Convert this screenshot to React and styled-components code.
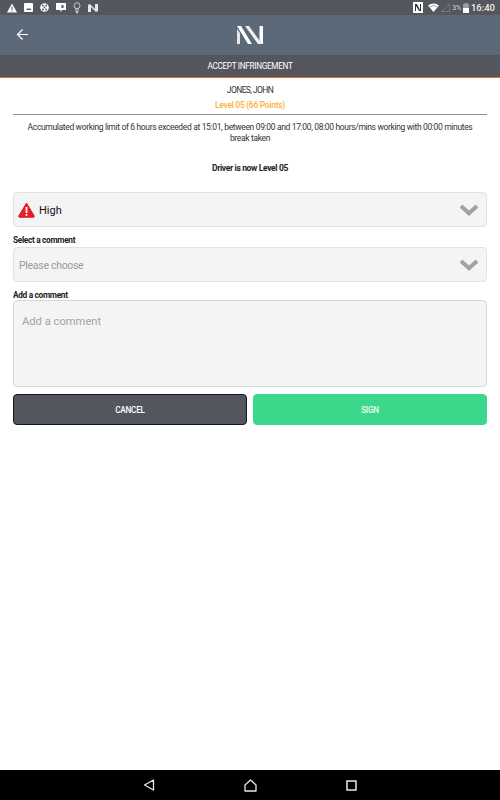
import React from 'react';
import styled, { createGlobalStyle } from 'styled-components';

const GlobalStyle = createGlobalStyle`
  html, body {
    margin: 0;
    padding: 0;
    background: #fff;
    font-family: Roboto, "Liberation Sans", sans-serif;
  }
`;

const Page = styled.div`
  width: 500px;
  height: 800px;
  display: flex;
  flex-direction: column;
  overflow: hidden;
`;

const StatusBar = styled.div`
  height: 15px;
  background: #55565e;
  display: flex;
  align-items: center;
  justify-content: space-between;
  padding: 0 5px 0 7px;
  color: #fff;
`;

const StatusGroup = styled.div`
  display: flex;
  align-items: center;
  gap: ${props => props.$gap || 0}px;
`;

const Clock = styled.span`
  font-size: 9.5px;
  font-weight: 500;
  color: #eee;
`;

const Percent = styled.span`
  font-size: 7px;
  letter-spacing: -0.2px;
  color: #d5d6da;
`;

const Header = styled.div`
  height: 40px;
  background: #5c6979;
  display: flex;
  align-items: center;
  justify-content: center;
  position: relative;
`;

const BackButton = styled.div`
  position: absolute;
  left: 16px;
  top: 13px;
  width: 13px;
  height: 13px;
  display: flex;
`;

const TitleBar = styled.div`
  height: 22px;
  background: #54555d;
  border-bottom: 1px solid #e0702c;
  display: flex;
  align-items: center;
  justify-content: center;
  color: #fff;
  font-size: 8.2px;
  letter-spacing: -0.3px;
`;

const Content = styled.div`
  flex: 1;
  padding: 0 13px;
  display: flex;
  flex-direction: column;
`;

const Summary = styled.div`
  height: 36px;
  border-bottom: 1px solid #8f8f8f;
  display: flex;
  flex-direction: column;
  align-items: center;
`;

const DriverName = styled.div`
  font-size: 8.5px;
  letter-spacing: -0.6px;
  color: #333;
  margin-top: 6px;
  line-height: 12px;
`;

const Level = styled.div`
  font-size: 8.5px;
  font-weight: 500;
  letter-spacing: -0.3px;
  color: #fbb034;
  margin-top: 3px;
  line-height: 12px;
`;

const Message = styled.div`
  font-size: 8.5px;
  line-height: 11px;
  letter-spacing: -0.345px;
  color: #333;
  text-align: center;
  margin: 7px 10px 0;
`;

const Notice = styled.div`
  font-size: 8.5px;
  font-weight: 700;
  letter-spacing: -0.35px;
  color: #222;
  text-align: center;
  margin-top: 18px;
  line-height: 12px;
`;

const SelectBox = styled.div`
  height: 35px;
  box-sizing: border-box;
  background: #f4f4f4;
  border: 1px solid #e2e2e2;
  border-radius: 4px;
  display: flex;
  align-items: center;
  justify-content: space-between;
  padding: 0 7px 0 ${props => props.$left}px;
  margin-top: ${props => props.$top || 0}px;
`;

const SelectValue = styled.div`
  display: flex;
  align-items: center;
  gap: 4px;
  padding-top: 1px;
  font-size: ${props => (props.$placeholder ? 10.5 : 11)}px;
  letter-spacing: ${props => (props.$placeholder ? -0.3 : 0)}px;
  color: ${props => (props.$placeholder ? '#9b9b9b' : '#111')};
`;

const FieldLabel = styled.div`
  font-size: 8.3px;
  font-weight: 700;
  letter-spacing: -0.32px;
  color: #222;
  line-height: ${props => props.$lineHeight}px;
  margin-top: 8px;
  margin-bottom: ${props => props.$bottom}px;
`;

const CommentBox = styled.div`
  height: 87px;
  box-sizing: border-box;
  background: #f4f4f4;
  border: 1px solid #d8d8d8;
  border-radius: 4px;
  padding: 14px 8px;
  font-size: 11.2px;
  line-height: 14px;
  color: #a3a3a3;
`;

const Actions = styled.div`
  display: flex;
  gap: 6px;
  margin-top: 7px;
`;

const ActionButton = styled.div`
  flex: 1;
  height: 31px;
  box-sizing: border-box;
  border-radius: 4px;
  display: flex;
  align-items: center;
  justify-content: center;
  color: ${props => (props.$primary ? '#e9fff4' : '#fff')};
  font-size: 8.2px;
  font-weight: 500;
  letter-spacing: -0.25px;
  background: ${props => (props.$primary ? '#3bd78a' : '#53565f')};
  border: 1px solid ${props => (props.$primary ? '#3bd78a' : '#14161c')};
`;

const NavBar = styled.div`
  height: 30px;
  background: #000;
  display: grid;
  grid-template-columns: 102px 101px 101px;
  justify-content: center;
  align-items: center;
  justify-items: center;
  padding-right: 1px;
`;

const Chevron = () => (
  <svg width="20" height="12" viewBox="0 0 20 12">
    <path d="M2 2 L10 9.2 L18 2" fill="none" stroke="#a2a2a2" strokeWidth="4" />
  </svg>
);

const WarningIcon = () => (
  <svg width="17" height="16" viewBox="0 0 17 16">
    <path d="M8.5 1 L16.3 14 Q16.6 15.3 15.3 15.3 L1.7 15.3 Q0.4 15.3 0.7 14 Z" fill="#ee1c25" stroke="#c7101a" strokeWidth="0.8" strokeLinejoin="round" />
    <rect x="7.6" y="5" width="1.8" height="6" fill="#fff" />
    <rect x="7.6" y="12" width="1.8" height="1.8" fill="#fff" />
  </svg>
);

const Logo = () => (
  <svg width="26" height="18" viewBox="0 0 26 18">
    <path d="M0 3 L3 7 V18 H0 Z" fill="#fff" opacity="0.85" />
    <path d="M0 0 H4 L15 18 H11 Z" fill="#fff" />
    <path d="M8 0 H12 L25 18 H21 Z" fill="#fff" opacity="0.9" />
    <path d="M22.5 0 H26 V18 H25 L22.5 14.5 Z" fill="#fff" />
  </svg>
);

const StatusIcons = () => (
  <StatusGroup $gap={7}>
    <svg width="10" height="10" viewBox="0 0 10 10">
      <path d="M5 0.5 L10 9.5 H0 Z" fill="#fff" />
      <rect x="4.5" y="3.5" width="1" height="3.5" fill="#55565e" />
      <rect x="4.5" y="7.6" width="1" height="1" fill="#55565e" />
    </svg>
    <svg width="9" height="9" viewBox="0 0 9 9">
      <rect width="9" height="9" rx="1" fill="#fff" />
      <path d="M2 7 L4 5 L5 6 L6 5 L7.5 7 Z" fill="#55565e" />
    </svg>
    <svg width="9" height="9" viewBox="0 0 10 10">
      <circle cx="5" cy="5" r="4.8" fill="#fff" />
      <circle cx="5" cy="5" r="1" fill="#55565e" />
      <circle cx="3.2" cy="2.8" r="1" fill="#55565e" />
      <circle cx="6.8" cy="2.8" r="1" fill="#55565e" />
      <circle cx="3.2" cy="7.2" r="1" fill="#55565e" />
      <circle cx="6.8" cy="7.2" r="1" fill="#55565e" />
    </svg>
    <svg width="10" height="9" viewBox="0 0 10 9">
      <path d="M0 0 H10 V7 H6 L5 9 L4 7 H0 Z" fill="#fff" />
      <rect x="5.5" y="2" width="2" height="3" fill="#55565e" />
    </svg>
    <svg width="8" height="12" viewBox="0 0 8 12">
      <circle cx="4" cy="3.7" r="3" fill="none" stroke="#d8d8d8" strokeWidth="0.9" />
      <path d="M3 6.5 V10 H5 V6.5" fill="none" stroke="#d8d8d8" strokeWidth="0.9" />
      <rect x="3" y="9" width="2" height="2.5" fill="#bbb" />
    </svg>
    <svg width="10" height="8" viewBox="0 0 10 8">
      <path d="M0 1 L2 0 L7 5 V0 H10 V7 L8 8 L3 3 V8 H0 Z" fill="#e8e8e8" />
    </svg>
  </StatusGroup>
);

const SystemIcons = () => (
  <StatusGroup $gap={2}>
    <svg width="10" height="11" viewBox="0 0 10 11" style={{ marginRight: 3 }}>
      <rect width="10" height="11" fill="#fff" />
      <path d="M2 2 H4 L7 8 V2 H8 V9 H6 L3 4 V9 H2 Z" fill="#33343a" />
    </svg>
    <svg width="11" height="9" viewBox="0 0 11 9">
      <path d="M0 2.5 Q5.5 -1.5 11 2.5 L5.5 9 Z" fill="#fff" />
      <path d="M2.2 3.6 Q5.5 1.6 8.8 3.6" fill="none" stroke="#55565e" strokeWidth="0.6" />
    </svg>
    <svg width="9" height="9" viewBox="0 0 9 9">
      <path d="M0.5 8.5 L8.5 0.8 V8.5 Z" fill="none" stroke="#85868c" strokeWidth="0.7" />
    </svg>
    <Percent>3%</Percent>
    <svg width="6" height="10" viewBox="0 0 6 10">
      <rect y="1" width="6" height="9" fill="#9a9ba0" />
      <rect x="1.5" width="3" height="1" fill="#9a9ba0" />
      <rect y="5" width="6" height="5" fill="#fff" />
    </svg>
    <Clock>16:40</Clock>
  </StatusGroup>
);

const BackArrow = () => (
  <svg width="13" height="13" viewBox="0 0 13 13">
    <path d="M12 6.5 H2 M6.5 1.5 L1.5 6.5 L6.5 11.5" fill="none" stroke="#fff" strokeWidth="1.2" />
  </svg>
);

export default function App() {
  return (
    <Page>
      <GlobalStyle />
      <StatusBar>
        <StatusIcons />
        <SystemIcons />
      </StatusBar>
      <Header>
        <BackButton>
          <BackArrow />
        </BackButton>
        <Logo />
      </Header>
      <TitleBar>ACCEPT INFRINGEMENT</TitleBar>
      <Content>
        <Summary>
          <DriverName>JONES, JOHN</DriverName>
          <Level>Level 05 (66 Points)</Level>
        </Summary>
        <Message>
          Accumulated working limit of 6 hours exceeded at 15:01, between 09:00 and 17:00, 08:00 hours/mins working with 00:00 minutes break taken
        </Message>
        <Notice>Driver is now Level 05</Notice>
        <SelectBox $top={18} $left={4}>
          <SelectValue>
            <WarningIcon />
            High
          </SelectValue>
          <Chevron />
        </SelectBox>
        <FieldLabel $lineHeight={11} $bottom={1}>Select a comment</FieldLabel>
        <SelectBox $left={5}>
          <SelectValue $placeholder>Please choose</SelectValue>
          <Chevron />
        </SelectBox>
        <FieldLabel $lineHeight={10} $bottom={0}>Add a comment</FieldLabel>
        <CommentBox>Add a comment</CommentBox>
        <Actions>
          <ActionButton>CANCEL</ActionButton>
          <ActionButton $primary>SIGN</ActionButton>
        </Actions>
      </Content>
      <NavBar>
        <svg width="12" height="12" viewBox="0 0 12 12">
          <path d="M10.5 1 V11 L1.5 6 Z" fill="none" stroke="#e8e8e8" strokeWidth="1.3" strokeLinejoin="round" />
        </svg>
        <svg width="13" height="13" viewBox="0 0 13 13">
          <path d="M1 12 V6 L6.5 1 L12 6 V12 Z" fill="none" stroke="#e8e8e8" strokeWidth="1.3" strokeLinejoin="round" />
        </svg>
        <svg width="11" height="11" viewBox="0 0 11 11">
          <rect x="1" y="1" width="9" height="9" fill="none" stroke="#e8e8e8" strokeWidth="1.5" />
        </svg>
      </NavBar>
    </Page>
  );
}
